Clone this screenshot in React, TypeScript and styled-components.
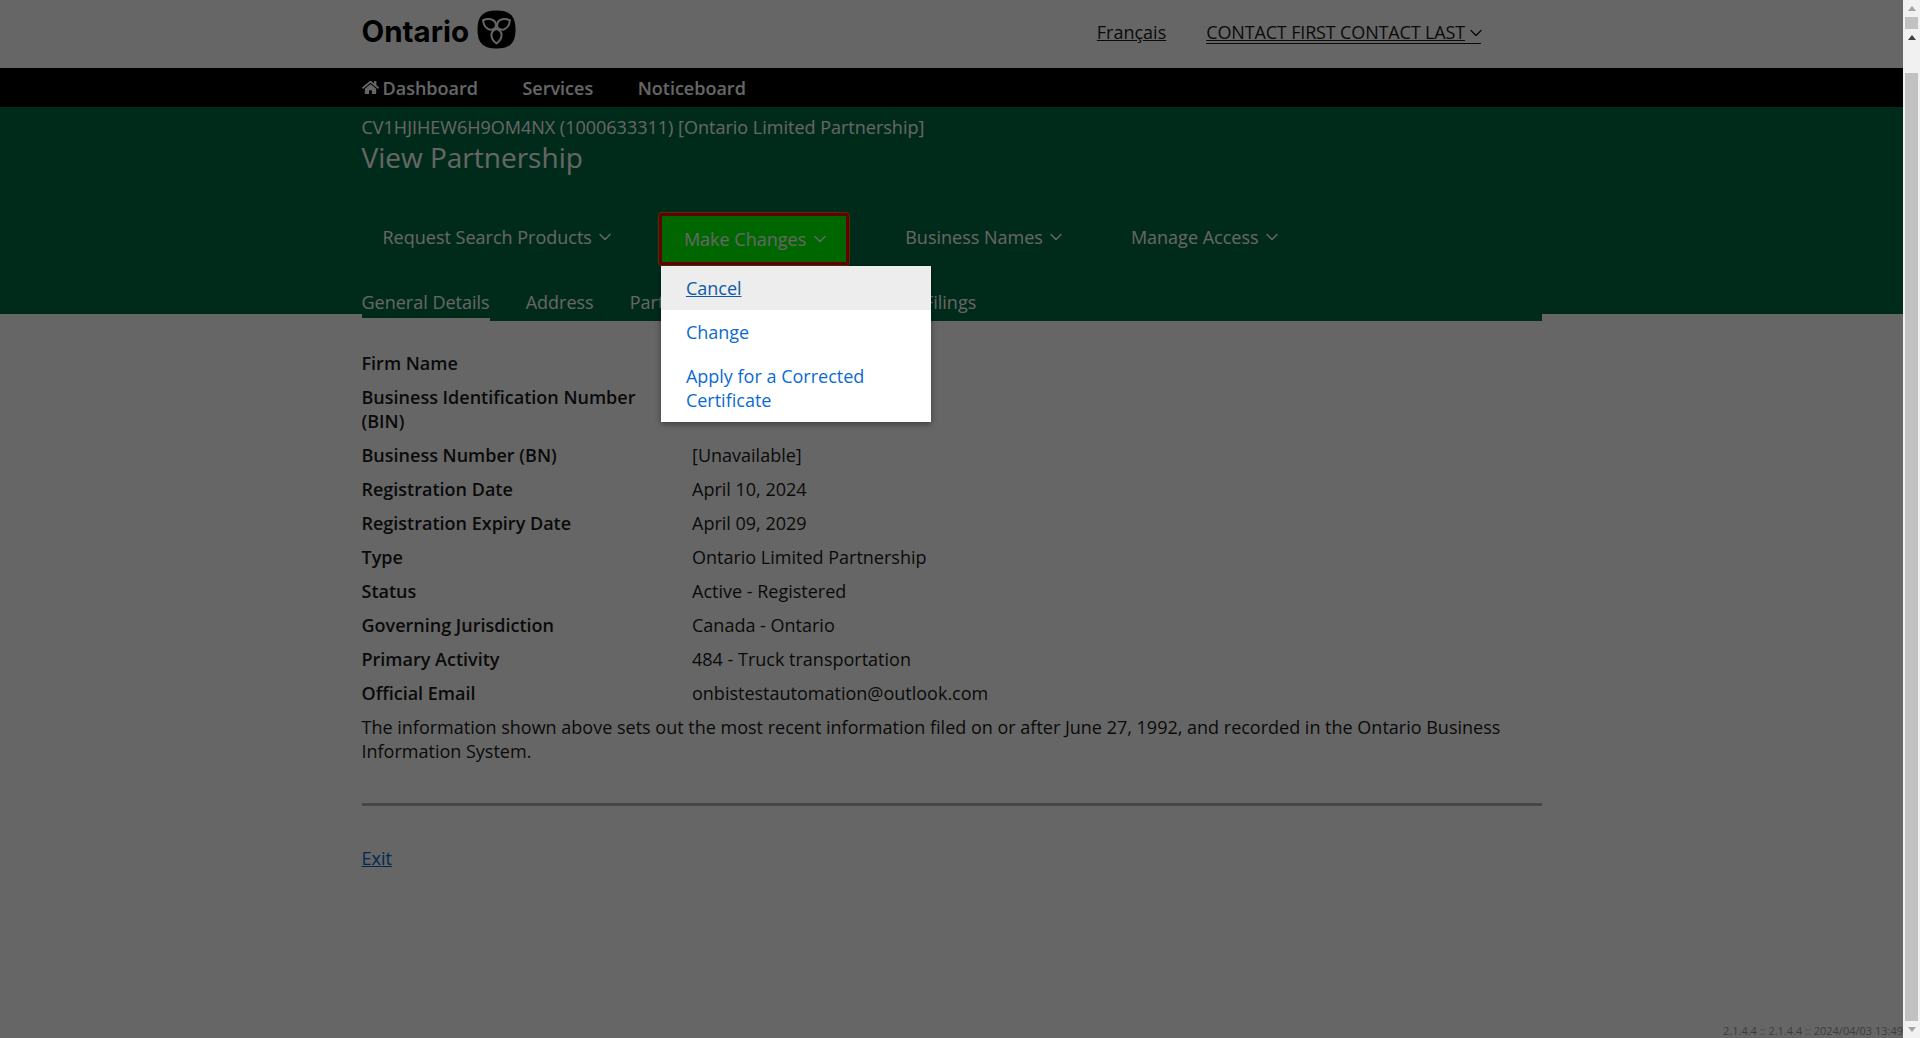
import * as React from "react";
import { ChevronDown } from "lucide-react";
import { FaHome } from "react-icons/fa";
import styled, { createGlobalStyle } from "styled-components";

const GlobalStyle = createGlobalStyle`
  html, body {
    margin: 0;
    height: 100%;
    overflow: hidden;
    background: #fff;
  }
  body {
    font-family: "Open Sans", "Liberation Sans", sans-serif;
    font-size: 18px;
    line-height: 24px;
    color: #1a1a1a;
  }
`;

const details: [string, string][] = [
  ["Firm Name", "CV1HJIHEW6H9OM4NX"],
  ["Business Identification Number (BIN)", "1000633311"],
  ["Business Number (BN)", "[Unavailable]"],
  ["Registration Date", "April 10, 2024"],
  ["Registration Expiry Date", "April 09, 2029"],
  ["Type", "Ontario Limited Partnership"],
  ["Status", "Active - Registered"],
  ["Governing Jurisdiction", "Canada - Ontario"],
  ["Primary Activity", "484 - Truck transportation"],
  ["Official Email", "onbistestautomation@outlook.com"],
];

const tabs = ["General Details", "Address", "Partnership", "Business Roles", "Filings"];

const PETAL = "M19.5 19C12.5 21 13 29 19.5 33.5C26 29 26.5 21 19.5 19Z";

function Logo() {
  return (
    <LogoLink>
      <LogoText>Ontario</LogoText>
      <svg width="39" height="39" viewBox="0 0 39 39">
        <path
          d="M19.5 0.5C33 0.5 38.5 6 38.5 19.5C38.5 33 33 38.5 19.5 38.5C6 38.5 0.5 33 0.5 19.5C0.5 6 6 0.5 19.5 0.5Z"
          fill="#000"
        />
        <g fill="none" stroke="#fff" strokeWidth="2" strokeLinejoin="round">
          <path d={PETAL} />
          <path d={PETAL} transform="rotate(120 19.5 18)" />
          <path d={PETAL} transform="rotate(240 19.5 18)" />
        </g>
      </svg>
    </LogoLink>
  );
}

function App() {
  return (
    <>
      <GlobalStyle />
      <Viewport>
        <Page>
          <Header>
            <Container>
              <HeaderRow>
                <Logo />
                <HeaderLinks>
                  <HeaderLink href="#">Français</HeaderLink>
                  <ContactLink href="#">
                    CONTACT FIRST CONTACT LAST
                    <ChevronDown size={20} strokeWidth={1.6} />
                  </ContactLink>
                </HeaderLinks>
              </HeaderRow>
            </Container>
          </Header>

          <MainNav>
            <Container>
              <NavRow>
                <NavItem href="#">
                  <FaHome size={17} />
                  Dashboard
                </NavItem>
                <NavItem href="#">Services</NavItem>
                <NavItem href="#">Noticeboard</NavItem>
              </NavRow>
            </Container>
          </MainNav>

          <Hero>
            <Container>
              <Subtitle>CV1HJIHEW6H9OM4NX (1000633311) [Ontario Limited Partnership]</Subtitle>
              <Title>View Partnership</Title>
              <Actions>
                <ActionButton>
                  Request Search Products
                  <ChevronDown size={20} strokeWidth={1.8} />
                </ActionButton>
                <MenuAnchor>
                  <ActionButton $open>
                    Make Changes
                    <ChevronDown size={20} strokeWidth={1.8} />
                  </ActionButton>
                  <Menu>
                    <MenuLink href="#" $hover>
                      Cancel
                    </MenuLink>
                    <MenuLink href="#">Change</MenuLink>
                    <MenuLink href="#">Apply for a Corrected Certificate</MenuLink>
                  </Menu>
                </MenuAnchor>
                <ActionButton>
                  Business Names
                  <ChevronDown size={20} strokeWidth={1.8} />
                </ActionButton>
                <ActionButton>
                  Manage Access
                  <ChevronDown size={20} strokeWidth={1.8} />
                </ActionButton>
              </Actions>
              <TabList>
                {tabs.map((tab, i) => (
                  <Tab key={tab} $active={i === 0}>
                    {tab}
                  </Tab>
                ))}
              </TabList>
            </Container>
          </Hero>

          <Content>
            <Container>
              <DetailList>
                {details.map(([label, value]) => (
                  <DetailRow key={label}>
                    <DetailLabel>{label}</DetailLabel>
                    <div>{value}</div>
                  </DetailRow>
                ))}
              </DetailList>
              <Note>
                The information shown above sets out the most recent information filed on or after
                June 27, 1992, and recorded in the Ontario Business Information System.
              </Note>
              <Rule />
              <ExitLink href="#">Exit</ExitLink>
            </Container>
          </Content>

          <Version>2.1.4.4 :: 2.1.4.4 :: 2024/04/03 13:49</Version>
          <Backdrop />
        </Page>

        <ScrollTrack>
          <ScrollArrow $color="#a3a3a3" />
          <ShortThumb />
          <ScrollArrow $color="#3f3f3f" />
          <LongThumb />
          <ScrollArrow $color="#a3a3a3" $down />
        </ScrollTrack>
      </Viewport>
    </>
  );
}

const Viewport = styled.div`
  display: flex;
  width: 1920px;
  height: 1038px;
  overflow: hidden;
`;

const Page = styled.div`
  position: relative;
  display: flex;
  flex-direction: column;
  flex: 1;
  min-width: 0;
`;

const Backdrop = styled.div`
  position: absolute;
  inset: 0;
  z-index: 10;
  background: rgba(0, 0, 0, 0.6);
`;

const Container = styled.div`
  width: 1180.5px;
  margin-left: 361.5px;
`;

const Header = styled.header`
  height: 68px;
  background: #fff;
`;

const HeaderRow = styled.div`
  display: flex;
  align-items: flex-start;
  justify-content: space-between;
`;

const LogoLink = styled.div`
  display: flex;
  align-items: center;
  gap: 8px;
  height: 39px;
  margin-top: 10px;
`;

const LogoText = styled.span`
  padding-top: 3px;
  font-family: Inter, "Liberation Sans", sans-serif;
  font-size: 29.5px;
  font-weight: 700;
  color: #000;
`;

const HeaderLinks = styled.div`
  display: flex;
  gap: 40px;
  margin-top: 20px;
  margin-right: 61px;
`;

const HeaderLink = styled.a`
  color: #1a1a1a;
  text-decoration: underline;
  white-space: nowrap;
`;

const ContactLink = styled.a`
  display: inline-flex;
  align-items: center;
  height: 23px;
  color: #1a1a1a;
  letter-spacing: -0.15px;
  white-space: nowrap;
  border-bottom: 1px solid #1a1a1a;

  svg {
    flex: none;
    margin: 2px -5px 0 1px;
  }
`;

const MainNav = styled.nav`
  height: 39px;
  background: #000;
`;

const NavRow = styled.div`
  display: flex;
  align-items: center;
  gap: 44.5px;
  height: 39px;
`;

const NavItem = styled.a`
  display: flex;
  align-items: center;
  gap: 4px;
  color: #fff;
  font-weight: 600;
  text-decoration: none;
`;

const Hero = styled.section`
  height: 207px;
  padding-top: 8px;
  box-sizing: border-box;
  background: #006b41;
  color: #fff;
`;

const Subtitle = styled.div`
  white-space: nowrap;
`;

const Title = styled.h1`
  margin: 0 0 38px;
  font-size: 28px;
  line-height: 36px;
  font-weight: 400;
`;

const Actions = styled.div`
  display: flex;
  align-items: flex-start;
  gap: 26.5px;
  height: 52px;
  margin-bottom: 25px;
`;

const MenuAnchor = styled.div`
  position: relative;
  margin-right: 9px;
`;

const ActionButton = styled.div<{ $open?: boolean }>`
  display: flex;
  align-items: center;
  gap: 3.5px;
  box-sizing: border-box;
  height: ${(p) => (p.$open ? "52px" : "48px")};
  padding: ${(p) => (p.$open ? "0 16px 0 22px" : "0 17px 0 21px")};
  white-space: nowrap;
  color: #fff;
  background: ${(p) => (p.$open ? "#00ff00" : "transparent")};
  border: ${(p) => (p.$open ? "3px solid #ff0000" : "none")};
  border-radius: ${(p) => (p.$open ? "3px" : "0")};
  box-shadow: ${(p) => (p.$open ? "0 0 0 1px #a58f00" : "none")};
`;

const Menu = styled.div`
  position: absolute;
  top: 53px;
  left: 2.5px;
  z-index: 20;
  width: 270px;
  background: #fff;
  box-shadow: 0 2px 6px rgba(0, 0, 0, 0.4);
`;

const MenuLink = styled.a<{ $hover?: boolean }>`
  display: block;
  padding: 10px 24.5px;
  color: ${(p) => (p.$hover ? "#0e5aa8" : "#0b6bd0")};
  background: ${(p) => (p.$hover ? "#ededed" : "#fff")};
  text-decoration: ${(p) => (p.$hover ? "underline" : "none")};
`;

const TabList = styled.div`
  display: flex;
  gap: 36px;
  height: 31px;
  background: #006b41;
`;

const Tab = styled.div<{ $active?: boolean }>`
  box-sizing: border-box;
  height: 31px;
  white-space: nowrap;
  color: #fff;
  border-bottom: 3px solid ${(p) => (p.$active ? "#fff" : "transparent")};
`;

const Content = styled.main`
  flex: 1;
  padding-top: 37px;
`;

const DetailList = styled.div`
  display: flex;
  flex-direction: column;
  gap: 10px;
`;

const DetailRow = styled.div`
  display: grid;
  grid-template-columns: 295px 1fr;
  column-gap: 35.5px;
`;

const DetailLabel = styled.div`
  font-weight: 600;
`;

const Note = styled.p`
  margin: 10px 0 40px;
`;

const Rule = styled.hr`
  height: 3px;
  margin: 0 0 40px;
  border: 0;
  background: #b0b0b0;
`;

const ExitLink = styled.a`
  color: #0066cc;
  text-decoration: underline;
`;

const Version = styled.div`
  align-self: flex-end;
  height: 14px;
  font-size: 11px;
  line-height: 14px;
  white-space: nowrap;
  color: #999;
`;

const ScrollTrack = styled.div`
  display: flex;
  flex-direction: column;
  align-items: center;
  flex: none;
  width: 17px;
  padding-top: 6px;
  box-sizing: border-box;
  background: #f1f1f1;
`;

const ScrollArrow = styled.div<{ $color: string; $down?: boolean }>`
  flex: none;
  width: 0;
  height: 0;
  border-left: 4px solid transparent;
  border-right: 4px solid transparent;
  ${(p) =>
    p.$down
      ? `border-top: 5px solid ${p.$color}; margin-top: 6px;`
      : `border-bottom: 5px solid ${p.$color};`}
`;

const ShortThumb = styled.div`
  flex: none;
  width: 13px;
  height: 12px;
  margin: 6px 0;
  background: #c1c1c1;
`;

const LongThumb = styled.div`
  flex: none;
  width: 13px;
  height: 948px;
  margin-top: 33px;
  background: #c1c1c1;
`;

export default App;
